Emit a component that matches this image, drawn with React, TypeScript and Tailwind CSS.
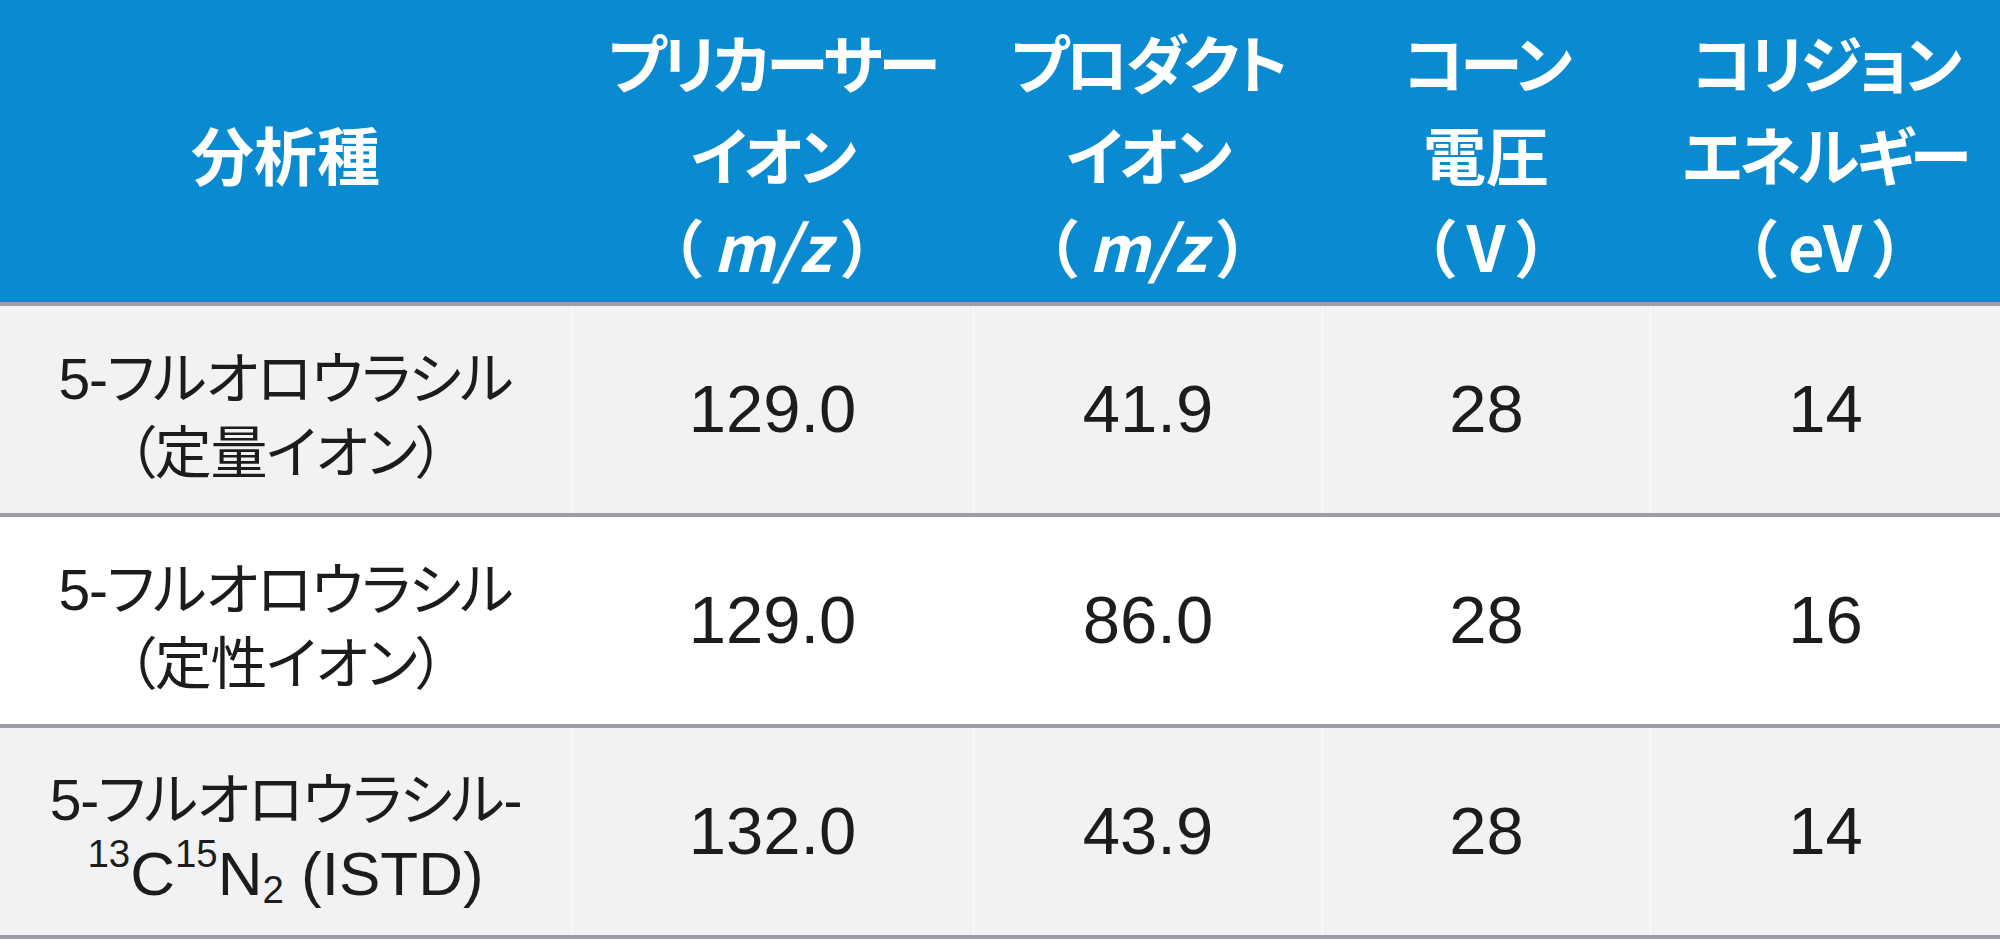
import React from "react";

const cols = "grid grid-cols-[571px_402px_349px_328px_350px]";

const kana = "tracking-[-0.06em]";
const inner = "mx-[0.18em]";

const headers: React.ReactNode[] = [
  <>分析種</>,
  <>
    <span className={kana}>プリカーサー</span>
    <br />
    <span className={kana}>イオン</span>
    <br />
    （<span className={`italic ${inner}`}>m/z</span>）
  </>,
  <>
    <span className={kana}>プロダクト</span>
    <br />
    <span className={kana}>イオン</span>
    <br />
    （<span className={`italic ${inner}`}>m/z</span>）
  </>,
  <>
    <span className={kana}>コーン</span>
    <br />
    電圧
    <br />
    （<span className={inner}>V</span>）
  </>,
  <>
    <span className={kana}>コリジョン</span>
    <br />
    <span className={kana}>エネルギー</span>
    <br />
    （<span className={inner}>eV</span>）
  </>,
];

type Row = {
  name: React.ReactNode;
  values: string[];
  bg: string;
};

const rows: Row[] = [
  {
    name: (
      <>
        5-フルオロウラシル
        <br />
        （定量イオン）
      </>
    ),
    values: ["129.0", "41.9", "28", "14"],
    bg: "bg-[#f2f2f4]",
  },
  {
    name: (
      <>
        5-フルオロウラシル
        <br />
        （定性イオン）
      </>
    ),
    values: ["129.0", "86.0", "28", "16"],
    bg: "bg-white",
  },
  {
    name: (
      <>
        5-フルオロウラシル-
        <br />
        <span className="text-[62px] tracking-normal">
          <sup className="text-[0.62em] -top-[0.72em]">13</sup>C
          <sup className="text-[0.62em] -top-[0.72em]">15</sup>N
          <sub className="text-[0.62em] -bottom-[0.22em]">2</sub> (ISTD)
        </span>
      </>
    ),
    values: ["132.0", "43.9", "28", "14"],
    bg: "bg-[#f2f2f4]",
  },
];

export default function App() {
  return (
    <div className="w-[2000px] h-[946px] bg-white overflow-hidden">
      <div
        className={`${cols} h-[302px] bg-[#0a8bd1] text-white font-bold border-b-4 border-[#9b9ea2] box-content`}
        style={{ fontFeatureSettings: '"palt"' }}
      >
        {headers.map((h, i) => (
          <div
            key={i}
            className="flex items-center justify-center pt-1 text-center text-[63px] leading-[92px] [font-family:'Noto_Sans_CJK_JP','Noto_Sans',sans-serif]"
          >
            <div>{h}</div>
          </div>
        ))}
      </div>
      {rows.map((r, i) => (
        <div
          key={i}
          className={`${cols} h-[207px] ${r.bg} text-[#1c1c1c] border-b-4 border-[#9b9ea2] box-content`}
        >
          <div
            className="flex items-center justify-center pt-3 text-center text-[57px] leading-[74px] tracking-[-0.02em] [font-family:'Liberation_Sans','Noto_Sans_CJK_JP',sans-serif]"
            style={{ fontFeatureSettings: '"palt"' }}
          >
            <div>{r.name}</div>
          </div>
          {r.values.map((v, j) => (
            <div
              key={j}
              className="flex items-center justify-center text-[67px] [font-family:'Liberation_Sans',Arial,sans-serif] border-l border-white/60"
            >
              {v}
            </div>
          ))}
        </div>
      ))}
    </div>
  );
}
